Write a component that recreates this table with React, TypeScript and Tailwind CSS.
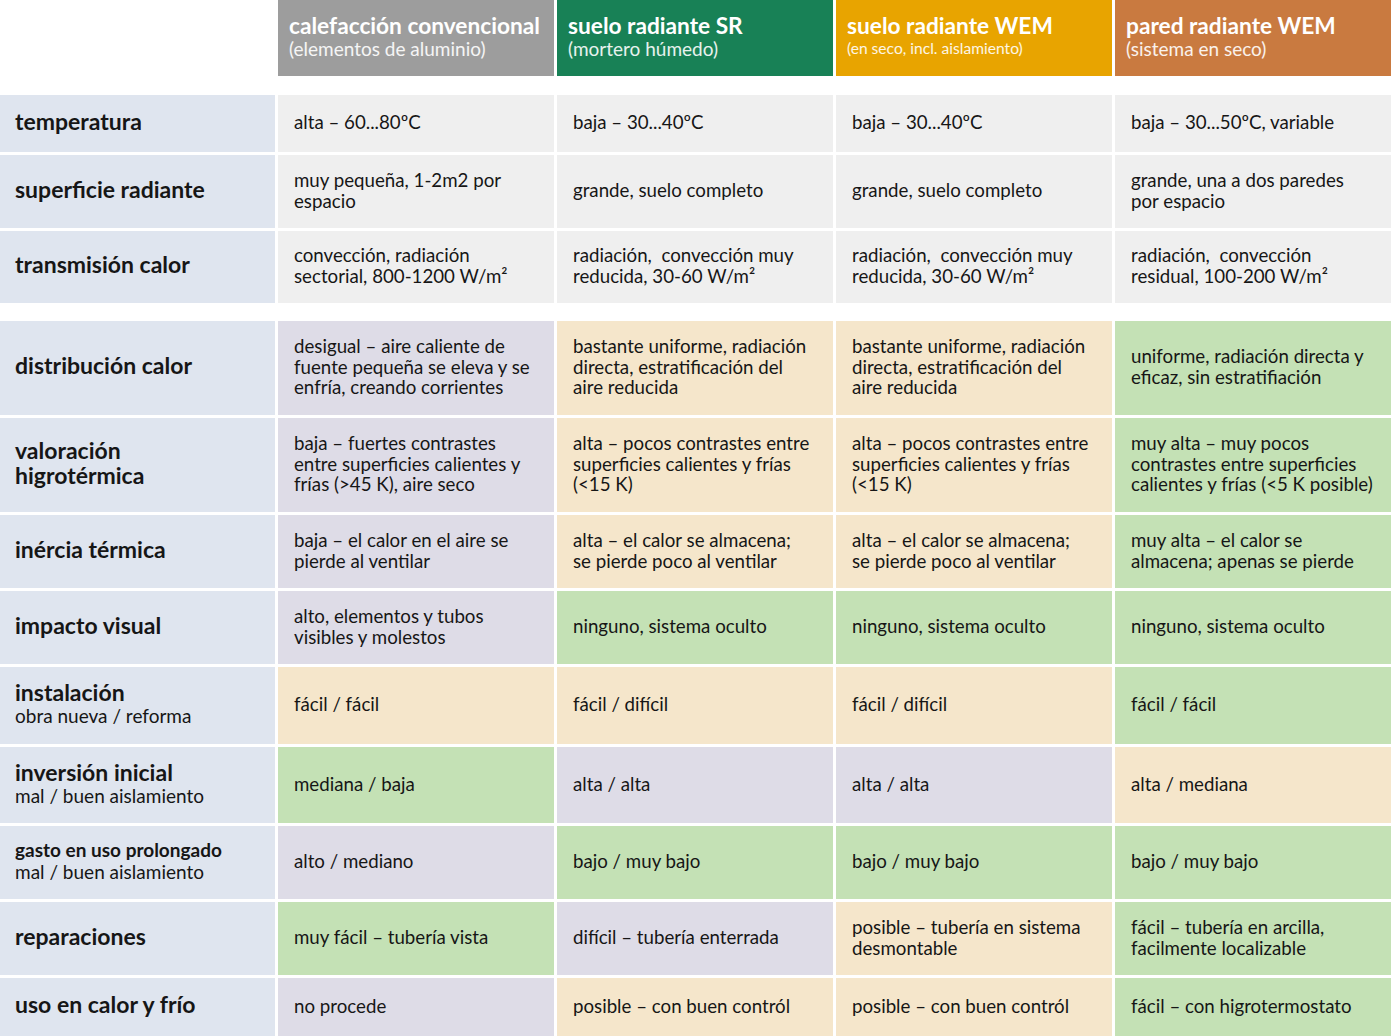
import React from "react";

type C = "g" | "l" | "b" | "n";
const bg: Record<C, string> = {
  g: "bg-[#efefef]",
  l: "bg-[#dedce7]",
  b: "bg-[#f5e6cb]",
  n: "bg-[#c4e1b5]",
};

type Row = {
  h: string;
  label: React.ReactNode;
  cells: { c: C; t: React.ReactNode }[];
};

const L = (a: string, sub?: string, small?: boolean) => (
  <div>
    <div className={small ? "font-bold text-[19px] leading-[22px]" : "font-bold text-[23px] leading-[25px]"}>{a}</div>
    {sub && <div className="text-[19px] leading-[21px]">{sub}</div>}
  </div>
);

const top: Row[] = [
  {
    h: "h-[57px]",
    label: L("temperatura"),
    cells: [
      { c: "g", t: "alta – 60...80ºC" },
      { c: "g", t: "baja – 30...40ºC" },
      { c: "g", t: "baja – 30...40ºC" },
      { c: "g", t: "baja – 30...50ºC, variable" },
    ],
  },
  {
    h: "h-[73px]",
    label: L("superficie radiante"),
    cells: [
      { c: "g", t: <>muy pequeña, 1-2m2 por<br />espacio</> },
      { c: "g", t: "grande, suelo completo" },
      { c: "g", t: "grande, suelo completo" },
      { c: "g", t: <>grande, una a dos paredes<br />por espacio</> },
    ],
  },
  {
    h: "h-[72px]",
    label: L("transmisión calor"),
    cells: [
      { c: "g", t: <>convección, radiación<br />sectorial, 800-1200 W/m²</> },
      { c: "g", t: <>radiación,&nbsp; convección muy<br />reducida, 30-60 W/m²</> },
      { c: "g", t: <>radiación,&nbsp; convección muy<br />reducida, 30-60 W/m²</> },
      { c: "g", t: <>radiación,&nbsp; convección<br />residual, 100-200 W/m²</> },
    ],
  },
];

const bottom: Row[] = [
  {
    h: "h-[94px]",
    label: L("distribución calor"),
    cells: [
      { c: "l", t: <>desigual – aire caliente de<br />fuente pequeña se eleva y se<br />enfría, creando corrientes</> },
      { c: "b", t: <>bastante uniforme, radiación<br />directa, estratificación del<br />aire reducida</> },
      { c: "b", t: <>bastante uniforme, radiación<br />directa, estratificación del<br />aire reducida</> },
      { c: "n", t: <>uniforme, radiación directa y<br />eficaz, sin estratifiación</> },
    ],
  },
  {
    h: "h-[94px]",
    label: (
      <div className="font-bold text-[23px] leading-[25px]">
        valoración
        <br />
        higrotérmica
      </div>
    ),
    cells: [
      { c: "l", t: <>baja – fuertes contrastes<br />entre superficies calientes y<br />frías (&gt;45 K), aire seco</> },
      { c: "b", t: <>alta – pocos contrastes entre<br />superficies calientes y frías<br />(&lt;15 K)</> },
      { c: "b", t: <>alta – pocos contrastes entre<br />superficies calientes y frías<br />(&lt;15 K)</> },
      { c: "n", t: <>muy alta – muy pocos<br />contrastes entre superficies<br />calientes y frías (&lt;5 K posible)</> },
    ],
  },
  {
    h: "h-[73px]",
    label: L("inércia térmica"),
    cells: [
      { c: "l", t: <>baja – el calor en el aire se<br />pierde al ventilar</> },
      { c: "b", t: <>alta – el calor se almacena;<br />se pierde poco al ventilar</> },
      { c: "b", t: <>alta – el calor se almacena;<br />se pierde poco al ventilar</> },
      { c: "n", t: <>muy alta – el calor se<br />almacena; apenas se pierde</> },
    ],
  },
  {
    h: "h-[73px]",
    label: L("impacto visual"),
    cells: [
      { c: "l", t: <>alto, elementos y tubos<br />visibles y molestos</> },
      { c: "n", t: "ninguno, sistema oculto" },
      { c: "n", t: "ninguno, sistema oculto" },
      { c: "n", t: "ninguno, sistema oculto" },
    ],
  },
  {
    h: "h-[77px]",
    label: L("instalación", "obra nueva / reforma"),
    cells: [
      { c: "b", t: "fácil / fácil" },
      { c: "b", t: "fácil / difícil" },
      { c: "b", t: "fácil / difícil" },
      { c: "n", t: "fácil / fácil" },
    ],
  },
  {
    h: "h-[76px]",
    label: L("inversión inicial", "mal / buen aislamiento"),
    cells: [
      { c: "n", t: "mediana / baja" },
      { c: "l", t: "alta / alta" },
      { c: "l", t: "alta / alta" },
      { c: "b", t: "alta / mediana" },
    ],
  },
  {
    h: "h-[73px]",
    label: L("gasto en uso prolongado", "mal / buen aislamiento", true),
    cells: [
      { c: "l", t: "alto / mediano" },
      { c: "n", t: "bajo / muy bajo" },
      { c: "n", t: "bajo / muy bajo" },
      { c: "n", t: "bajo / muy bajo" },
    ],
  },
  {
    h: "h-[73px]",
    label: L("reparaciones"),
    cells: [
      { c: "n", t: "muy fácil – tubería vista" },
      { c: "l", t: "difícil – tubería enterrada" },
      { c: "b", t: <>posible – tubería en sistema<br />desmontable</> },
      { c: "n", t: <>fácil – tubería en arcilla,<br />facilmente localizable</> },
    ],
  },
  {
    h: "h-[58px]",
    label: L("uso en calor y frío"),
    cells: [
      { c: "l", t: "no procede" },
      { c: "b", t: "posible – con buen contról" },
      { c: "b", t: "posible – con buen contról" },
      { c: "n", t: "fácil – con higrotermostato" },
    ],
  },
];

const grid = "grid grid-cols-[275px_276px_276px_276px_276px] gap-x-[3px]";

function TRow({ r }: { r: Row }) {
  return (
    <div className={`${grid} ${r.h}`}>
      <div className="bg-[#dfe5ef] flex items-center pl-[15px] pb-[5px]">{r.label}</div>
      {r.cells.map((c, i) => (
        <div key={i} className={`${bg[c.c]} flex items-center pl-[16px] pb-[2px] text-[18.7px] leading-[20.8px]`}>
          <div>{c.t}</div>
        </div>
      ))}
    </div>
  );
}

const heads = [
  { bg: "bg-[#9d9d9d]", t: "calefacción convencional", s: "(elementos de aluminio)", small: false },
  { bg: "bg-[#188156]", t: "suelo radiante SR", s: "(mortero húmedo)", small: false },
  { bg: "bg-[#e8a400]", t: "suelo radiante WEM", s: "(en seco, incl. aislamiento)", small: true },
  { bg: "bg-[#c97a40]", t: "pared radiante WEM", s: "(sistema en seco)", small: false },
];

export default function App() {
  return (
    <div
      className="w-[1392px] h-[1036px] overflow-hidden bg-white text-[#161616]"
      style={{ fontFamily: "Lato, 'Open Sans', sans-serif" }}
    >
      <div className={`${grid} h-[76px]`}>
        <div />
        {heads.map((h, i) => (
          <div key={i} className={`${h.bg} text-white pl-[11px] pt-[12px]`}>
            <div className="font-bold text-[22.7px] leading-[27px]">{h.t}</div>
            <div className={h.small ? "text-[15.6px] leading-[19px] text-white/90" : "text-[19px] leading-[20px] text-white/90"}>{h.s}</div>
          </div>
        ))}
      </div>
      <div className="flex flex-col gap-y-[3px] mt-[19px]">
        {top.map((r, i) => (
          <TRow key={i} r={r} />
        ))}
      </div>
      <div className="flex flex-col gap-y-[3px] mt-[18px]">
        {bottom.map((r, i) => (
          <TRow key={i} r={r} />
        ))}
      </div>
    </div>
  );
}
